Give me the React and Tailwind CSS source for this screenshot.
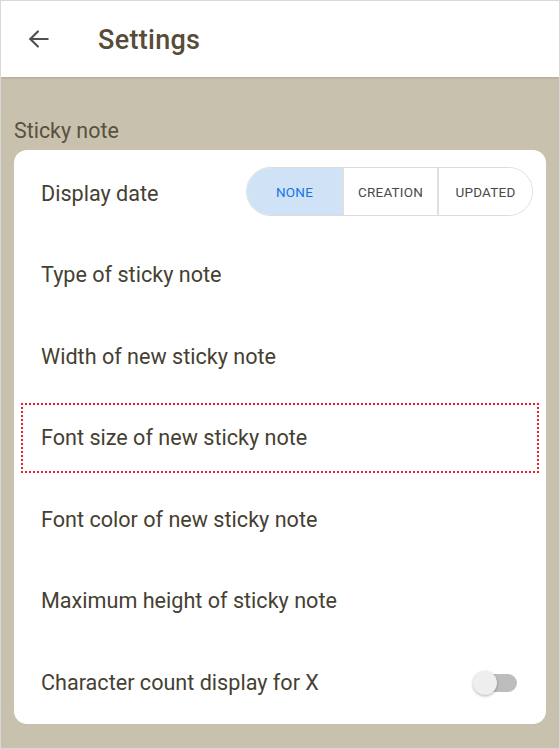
import React, { useState } from 'react'

const rows = [
  'Type of sticky note',
  'Width of new sticky note',
  'Font size of new sticky note',
  'Font color of new sticky note',
  'Maximum height of sticky note',
]

const App = () => {
  const [mode, setMode] = useState('NONE')
  const [count, setCount] = useState(false)

  return (
    <div className="w-[560px] h-[749px] bg-[#c8c1ad] border border-[#d8d8d8] flex flex-col overflow-hidden" style={{ fontFamily: 'Roboto, "Noto Sans", sans-serif' }}>
      <header className="h-[76px] shrink-0 bg-white flex items-center shadow-[0_1px_2px_rgba(0,0,0,0.15)]">
        <button className="w-[74px] flex justify-center pl-[2px] text-[#4f4f4f]">
          <svg width="26" height="26" viewBox="0 0 24 24" fill="none" stroke="currentColor" strokeWidth="2" strokeLinecap="round" strokeLinejoin="round">
            <path d="M20 12H4" />
            <path d="M11 5l-7 7 7 7" />
          </svg>
        </button>
        <h1 className="ml-[23px] mt-[2px] text-[27px] font-medium text-[#574c38] tracking-[0.3px]">Settings</h1>
      </header>

      <div className="px-[13px]">
        <p className="mt-[41px] text-[21.4px] text-[#5a5040] leading-[26px]">Sticky note</p>

        <div className="mt-[6px] pt-[3px] bg-white rounded-[13px] text-[21.6px] text-[#463f33]">
          <div className="h-[81.5px] flex items-center justify-between pl-[27px] pr-[13px]">
            <span>Display date</span>
            <div className="flex h-[49px] mb-[4px] rounded-full border border-[#dcdcdc] overflow-hidden text-[13.5px] font-normal tracking-[0.2px]">
              {['NONE', 'CREATION', 'UPDATED'].map((m, i) => (
                <button key={m} onClick={() => setMode(m)}
                  className={`w-[95px] flex items-center justify-center ${i > 0 ? 'border-l-2 border-[#e0e0e0]' : ''} ${mode === m ? 'bg-[#cfe2f6] text-[#1a73e8]' : 'bg-white text-[#4a4a4a]'}`}
                >
                  {m}
                </button>
              ))}
            </div>
          </div>

          {rows.map((r, i) => (
            <div key={r} className="h-[81.5px] flex items-center px-[7px]">
              <div className={`w-full h-[70px] flex items-center ${i === 2 ? 'pl-[18px] border-2 border-dotted border-[#ea1c2c]' : 'pl-[20px]'}`}>
                <span>{r}</span>
              </div>
            </div>
          ))}

          <div className="h-[81.5px] flex items-center justify-between pl-[27px] pr-[29px]">
            <span>Character count display for X</span>
            <button onClick={() => setCount(!count)} className="relative w-[44px] h-[24px] flex items-center">
              <span className={`absolute left-[6px] right-0 h-[18px] rounded-full ${count ? 'bg-[#9cc3f0]' : 'bg-[#bdbdbd]'}`} />
              <span className={`absolute w-[24px] h-[24px] rounded-full shadow-[0_1px_3px_rgba(0,0,0,0.3)] ${count ? 'left-[20px] bg-[#1a73e8]' : 'left-0 bg-[#eeeeee]'}`} />
            </button>
          </div>
        </div>
      </div>
    </div>
  )
}

export default App
